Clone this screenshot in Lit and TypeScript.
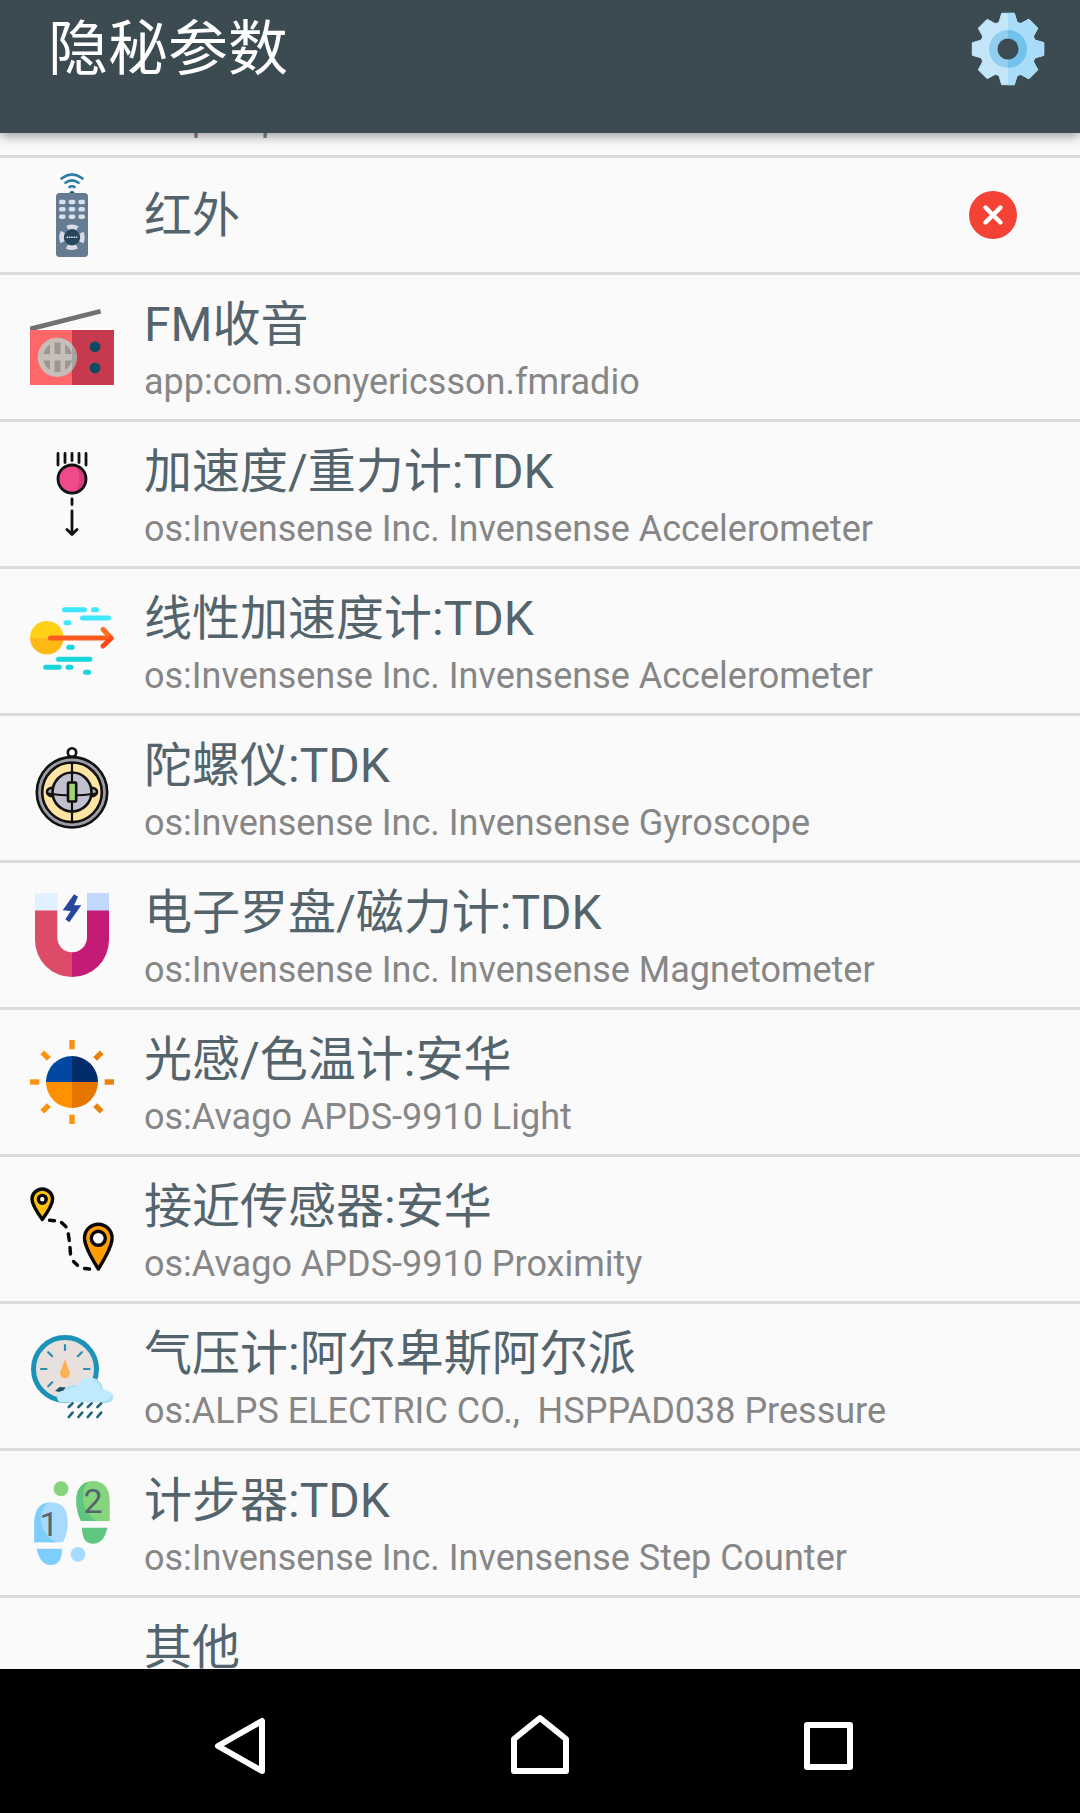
import { LitElement, html, css, svg, nothing } from "lit";
import { customElement, query } from "lit/decorators.js";

interface Entry {
  title: string;
  detail?: string;
  icon?: unknown;
  missing?: boolean;
}

const remoteIcon = svg`
  <g fill="none" stroke="#2a7ba8" stroke-width="2.6" stroke-linecap="round">
    <path d="M31.500 5.500Q42 -2.500 52.500 5.500"/>
    <path d="M35.500 9.800Q42 5 48.500 9.800"/>
    <path d="M39.500 14Q42 12.600 44.500 14"/>
  </g>
  <circle cx="42" cy="20.500" r="2.600" fill="#22506b"/>
  <rect x="26" y="20" width="32" height="64" rx="3.500" fill="#647b91"/>
  <g fill="#d9e1ec">
    ${[29, 36.3, 43.7].map((y) => [32.3, 42, 51.7].map((x) => svg`<rect x=${x - 3.3} y=${y - 2.2} width="6.600" height="4.400" rx="1.800"/>`))}
  </g>
  <circle cx="42" cy="64.300" r="10.500" fill="none" stroke="#d9dbe6" stroke-width="4.600" stroke-dasharray="10.500 6" stroke-dashoffset="5.200"/>
  <circle cx="42" cy="64.300" r="8" fill="#27465d"/>
  <path d="M36.500 64.300h11" stroke="#cfe0ea" stroke-width="1.600" stroke-dasharray="1.600 .7"/>`;

const radioIcon = svg`
  <path d="M0 21.500L70 4l1.200 4.500L6 25H0z" fill="#737070"/>
  <path d="M0 25h42v55H0z" fill="#ff6768"/>
  <path d="M42 25h42v55H42z" fill="#c7394f"/>
  <circle cx="27.300" cy="52.300" r="19.600" fill="#c6bfb9"/>
  <path d="M42 39.500a19.600 19.600 0 0 1 0 25.600z" fill="#aaa29d"/>
  <g fill="#9b9692">
    <path d="M24.500 37.500h6V49h-6zM24.500 55.500h6V67h-6z"/>
    <path d="M20 39.500V49h-6.500Q15 42.500 20 39.500zM20 65V55.500h-6.500Q15 62 20 65zM35 39.500V49h7Q40 42.500 35 39.500zM35 65V55.500h7Q40 62 35 65z"/>
  </g>
  <circle cx="65" cy="41.800" r="5.400" fill="#0c4b64"/>
  <circle cx="65" cy="63" r="5.400" fill="#0c4b64"/>`;

const gravityIcon = svg`
  <circle cx="42" cy="27" r="14" fill="#ef4a8c"/>
  <path d="M46 14a14 14 0 0 1 0 26Q53 27 46 14z" fill="#d63d7d"/>
  <g fill="none" stroke="#111" stroke-width="2.800" stroke-linecap="round" stroke-linejoin="round">
    <circle cx="42" cy="27" r="14"/>
    <path d="M28 1.500v11.500M35 1.500v9M42 1.500v7M49 1.500v9M56 1.500v11.500M42 47v5.500M42 59v23M37 77.500l5 5 5-5"/>
  </g>`;

const linearIcon = svg`
  <path d="M0 38.700a16.800 16.800 0 0 1 33.600 0z" fill="#ffd013"/>
  <path d="M0 38.700a16.800 16.800 0 0 0 33.600 0z" fill="#ffb914"/>
  <g fill="none" stroke-width="5" stroke-linecap="round">
    <path stroke="#3fe8fa" d="M34.500 10.700h20M63.500 10.700h3M52.500 19h26M36 23.700h3"/>
    <path stroke="#17d5da" d="M38.700 48.300h3.500M28.500 60.300h31.500M15.700 68.300h13.500M38 68.300h3M55.500 73.300h3"/>
    <path stroke="#ff5a1f" stroke-linejoin="round" d="M20.500 39H81"/>
    <path stroke="#ff6f22" d="M73 30.300L81 39"/>
    <path stroke="#ff4718" d="M81 39.500l-8 7.500"/>
  </g>`;

const gyroIcon = svg`
  <g stroke="#111" stroke-width="2.600" stroke-linejoin="round">
    <circle cx="42" cy="6.500" r="4.200" fill="#fff"/>
    <circle cx="42" cy="46.300" r="35.200" fill="#9b9ea7"/>
    <circle cx="42" cy="46.300" r="29.800" fill="#ffe5a5"/>
    <path d="M24 41.500Q17 42 17 46t7 4.500zM60 41.500Q67 42 67 46t-7 4.500z" fill="#b9bac4"/>
    <circle cx="42" cy="46" r="19.500" fill="#c0c1cc"/>
    <path d="M18 47.500Q42 51.500 66 47.500M42 16v61" fill="none" stroke-width="2.200"/>
    <rect x="38" y="36.500" width="8.200" height="19" rx="1" fill="#9fd56e"/>
  </g>`;

const magnetIcon = svg`
  <path d="M5 17h22.300v27.500A14.700 14.700 0 0 0 42 59.200V84A37 37 0 0 1 5 47z" fill="#dd4b68"/>
  <path d="M79 17H57v27.500a14.700 14.700 0 0 1-15 14.700V84a37 37 0 0 0 37-37z" fill="#c41c76"/>
  <path d="M5 0h22.300v17.500H5z" fill="#e2f1ff"/>
  <path d="M57 0h22v17.500H57z" fill="#c1d9ff"/>
  <path d="M44 1.300l4 2.400-4 8.600h7.300l-12 17-4-3 5.400-8.300-8-.7z" fill="#27479c"/>`;

const sunIcon = svg`
  <path d="M16 42a26 26 0 0 1 26-26v26z" fill="#0048a2"/>
  <path d="M68 42a26 26 0 0 0-26-26v26z" fill="#002d69"/>
  <path d="M16 42a26 26 0 0 0 26 26V42z" fill="#ff9100"/>
  <path d="M68 42a26 26 0 0 1-26 26V42z" fill="#e57600"/>
  ${[0, 45, 90, 135, 180, 225, 270, 315].map(
    (a) => svg`<rect x="39.300" y="0" width="5.400" height="9.300" fill=${a > 0 && a < 180 ? "#e9810b" : "#fb9210"} transform="rotate(${a} 42 42)"/>`
  )}`;

const proximityIcon = svg`
  <g stroke="#080808" stroke-width="3.400" stroke-linejoin="round" stroke-linecap="round">
    <path d="M12.300 32.500Q2 18 2 12.300a10.300 10.300 0 0 1 20.600 0Q22.600 18 12.300 32.500z" fill="#ffc20a"/>
    <circle cx="12.300" cy="12.300" r="3.900" fill="#fff"/>
    <path d="M68.300 82Q54.500 60 54.500 51a13.800 13.800 0 0 1 27.600 0Q82.100 60 68.300 82z" fill="#ff9d05"/>
    <circle cx="68.300" cy="51.300" r="7" fill="#fff"/>
    <path d="M19.500 33.300l5 .4M31.500 35.500l4.500 4.300M38.300 47l1 6.500M40 60.500l.5 6.500M43.500 74.500l4 3.800M54.500 81.500l5 .5" fill="none"/>
  </g>`;

const pressureIcon = svg`
  <circle cx="35" cy="35" r="31.500" fill="#e8e0dc" stroke="#1b92b8" stroke-width="5"/>
  <g fill="none" stroke="#2a8fb2" stroke-width="2.200" stroke-linecap="round">
    <path d="M35 11v5M11 35h5.500M54 35h5.500M18.200 18.200l4 4M51.800 18.200l-4 4M22.200 48.200l-4 4"/>
  </g>
  <path d="M35 25l3.800 11a5 5 0 1 1-7.600 0z" fill="#fcb155"/>
  <path d="M25 57l4.500-4 6.500.5-4 5z" fill="#1b5166"/>
  <path d="M32 68.500q-5-.5-5-5.500 0-6 7-6.500 2-5 8-5 3 0 5 1 4-9 12-9 11 0 13.500 11.500 11 2.500 11 8.500 0 5-6 5z" fill="#bfeafb"/>
  <path d="M37 56q3-4.500 9-3.500M63 45.500q8 1.500 9 9.500M73 68.500q8 0 8-6" fill="none" stroke="#a7dff5" stroke-width="2"/>
  <g stroke="#1d637c" stroke-width="2.600" stroke-linecap="round">
    ${[38.8, 48.4, 57.8, 67.4].map((x) => svg`<path d="M${x} 73l3.800-3.600M${x} 83l3.800-4.400"/>`)}
  </g>`;

const stepsIcon = svg`
  <circle cx="31" cy="7.700" r="7.400" fill="#87d47f"/>
  <circle cx="48" cy="73.300" r="7.400" fill="#a5dbff"/>
  <path d="M4.300 61.300V41Q5 21.300 21.500 21.300 37.700 22 37.700 41q0 11-4.700 20.300z" fill="#a6dbff"/>
  <path d="M4.300 61.300V41Q5 24 17.500 21.700 11 28 11 38q0 15 15 23.300z" fill="#7dcdfb"/>
  <path d="M6.700 67.700H32q0 16.300-11 16.300T6.700 67.700z" fill="#7dcdff"/>
  <path d="M79.700 40V19.500Q79 0 62.500 0 46.300 1 46.300 19.700q0 11 4.700 20.300z" fill="#86d47e"/>
  <path d="M51 40Q46.300 31 46.300 19.700 46.300 5 57.500 1 52.500 8 53 19q1.500 14 14 21z" fill="#5fc682"/>
  <path d="M77.300 46.700H52q0 16 11 16t14.300-16z" fill="#5fc682"/>
  <text class="digit" x="19" y="54.500">1</text>
  <text class="digit" x="63" y="31.500">2</text>`;

const GEAR_OUTLINE = Array.from({ length: 8 }, (_, i) => {
  const spoke: Array<[number, number]> = [
    [-22, 28], [-18, 28.5], [-10, 36.2], [10, 36.2], [18, 28.5],
  ];
  return spoke
    .map(([a, r]) => {
      const t = ((a + i * 45 - 90) * Math.PI) / 180;
      return `${(37 + r * Math.cos(t)).toFixed(1)},${(37 + r * Math.sin(t)).toFixed(1)}`;
    })
    .join(" ");
}).join(" ");

const ENTRIES: Entry[] = [
  { title: "", detail: "os:pn5 p" },
  { title: "红外", icon: remoteIcon, missing: true },
  { title: "FM收音", detail: "app:com.sonyericsson.fmradio", icon: radioIcon },
  { title: "加速度/重力计:TDK", detail: "os:Invensense Inc. Invensense Accelerometer", icon: gravityIcon },
  { title: "线性加速度计:TDK", detail: "os:Invensense Inc. Invensense Accelerometer", icon: linearIcon },
  { title: "陀螺仪:TDK", detail: "os:Invensense Inc. Invensense Gyroscope", icon: gyroIcon },
  { title: "电子罗盘/磁力计:TDK", detail: "os:Invensense Inc. Invensense Magnetometer", icon: magnetIcon },
  { title: "光感/色温计:安华", detail: "os:Avago APDS-9910 Light", icon: sunIcon },
  { title: "接近传感器:安华", detail: "os:Avago APDS-9910 Proximity", icon: proximityIcon },
  { title: "气压计:阿尔卑斯阿尔派", detail: "os:ALPS ELECTRIC CO.,  HSPPAD038 Pressure", icon: pressureIcon },
  { title: "计步器:TDK", detail: "os:Invensense Inc. Invensense Step Counter", icon: stepsIcon },
  { title: "其他", detail: "" },
];

@customElement("app-root")
export class AppRoot extends LitElement {
  @query("main") private list!: HTMLElement;

  static styles = css`
    :host {
      display: flex;
      flex-direction: column;
      height: 100vh;
      overflow: hidden;
      background: #fafafa;
      font-family: Roboto, "Noto Sans CJK SC", sans-serif;
    }
    header {
      z-index: 1;
      display: flex;
      flex: none;
      align-items: center;
      justify-content: space-between;
      padding: 0 35px 35px 48px;
      background: #3c4a51;
      box-shadow: 0 2px 12px rgba(0, 0, 0, 0.45);
    }
    h1 {
      margin: 0;
      padding-top: 2px;
      color: #fff;
      font-size: 60px;
      font-weight: 400;
      line-height: 96px;
    }
    button {
      display: flex;
      padding: 0;
      border: 0;
      background: none;
      cursor: pointer;
    }
    .gear {
      width: 74px;
      height: 74px;
    }
    main {
      flex: 1;
      min-height: 0;
      overflow-y: auto;
      scrollbar-width: none;
    }
    ul {
      margin: 0;
      padding: 0;
      list-style: none;
    }
    .row {
      display: flex;
      align-items: center;
      gap: 30px;
      box-sizing: border-box;
      min-height: 147px;
      padding: 0 62px 0 30px;
      border-bottom: 3px solid #dcdcdc;
    }
    .row.single {
      min-height: 117px;
    }
    .icon {
      flex: none;
      width: 84px;
      height: 84px;
      overflow: visible;
    }
    .texts {
      flex: 1;
      min-width: 0;
      padding: 18px 0 12px;
    }
    .single .texts {
      padding: 2px 0 0;
    }
    .title,
    .detail {
      margin: 0;
      white-space: pre;
    }
    .title {
      min-height: 64px;
      color: #54646c;
      font-size: 48px;
      font-weight: 400;
      line-height: 64px;
    }
    .detail {
      min-height: 50px;
      color: #868686;
      font-size: 36px;
      line-height: 50px;
    }
    .status {
      flex: none;
      width: 50px;
      height: 50px;
    }
    .digit {
      fill: #55656e;
      font-size: 34px;
      font-weight: 400;
      text-anchor: middle;
    }
    nav {
      display: flex;
      flex: none;
      justify-content: center;
      gap: 192px;
      padding: 24px 0;
      background: #000;
    }
    .key {
      width: 96px;
      height: 96px;
      fill: none;
      stroke: #fff;
      stroke-width: 6;
      stroke-linejoin: round;
    }
  `;

  protected firstUpdated() {
    this.list.scrollTop = 122;
  }

  private renderEntry(entry: Entry) {
    const single = entry.detail === undefined;
    return html`
      <li class="row ${single ? "single" : ""}">
        <svg class="icon" viewBox="0 0 84 84" aria-hidden="true">${entry.icon ?? nothing}</svg>
        <div class="texts">
          <h2 class="title">${entry.title}</h2>
          ${single ? nothing : html`<p class="detail">${entry.detail}</p>`}
        </div>
        ${entry.missing
          ? html`<svg class="status" viewBox="0 0 50 50" role="img" aria-label="不支持">
              <circle cx="25" cy="25" r="24" fill="#f44336" />
              <path d="M17.500 17.500l15 15M32.500 17.500l-15 15" stroke="#fff" stroke-width="4.400" stroke-linecap="round" />
            </svg>`
          : nothing}
      </li>
    `;
  }

  render() {
    return html`
      <header>
        <h1>隐秘参数</h1>
        <button type="button" aria-label="设置">
          <svg class="gear" viewBox="0 0 74 74">
            <defs>
              <clipPath id="right-half"><path d="M37 0h37v74H37z" /></clipPath>
            </defs>
            <polygon points=${GEAR_OUTLINE} fill="#c4e6f9" stroke="#c4e6f9" stroke-linejoin="round" />
            <g clip-path="url(#right-half)">
              <polygon points=${GEAR_OUTLINE} fill="#a9dcf8" stroke="#a9dcf8" stroke-linejoin="round" />
            </g>
            <circle cx="37" cy="37" r="19" fill="#92ceef" />
            <path d="M37 18a19 19 0 0 1 0 38z" fill="#73c2eb" />
            <circle cx="37" cy="37" r="10.500" fill="#3c4a51" />
          </svg>
        </button>
      </header>
      <main>
        <ul>
          ${ENTRIES.map((entry) => this.renderEntry(entry))}
        </ul>
      </main>
      <nav>
        <button type="button" aria-label="返回">
          <svg class="key" viewBox="0 0 96 96"><path d="M58 28v50L14 53z" /></svg>
        </button>
        <button type="button" aria-label="主页">
          <svg class="key" viewBox="0 0 96 96"><path d="M48 25l26 21v32H22V46z" /></svg>
        </button>
        <button type="button" aria-label="最近任务">
          <svg class="key" viewBox="0 0 96 96"><path d="M27 32h43v42H27z" /></svg>
        </button>
      </nav>
    `;
  }
}
